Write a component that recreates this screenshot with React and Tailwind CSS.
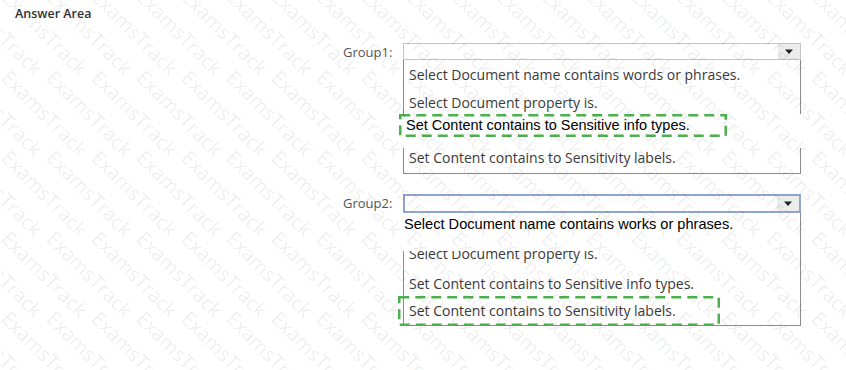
import React from "react";

const OPEN = { fontFamily: '"Open Sans", "Noto Sans", sans-serif' };
const ARIAL = { fontFamily: '"Liberation Sans", Arial, sans-serif' };

function Arrow() {
  return (
    <div className="w-[22px] h-full bg-[#ececec] flex items-center justify-center">
      <svg width="10" height="6" viewBox="0 0 10 6">
        <polygon points="1,0.5 9,0.5 5,5" fill="#222" />
      </svg>
    </div>
  );
}

function DashedBox({ w, h, className }) {
  return (
    <svg className={"absolute pointer-events-none " + className} width={w} height={h} viewBox={`0 0 ${w} ${h}`}>
      <rect x="1.25" y="1.25" width={w - 2.5} height={h - 2.5} fill="none" stroke="#4db04f" strokeWidth="2.5" strokeDasharray="10 6" />
    </svg>
  );
}

function Watermark() {
  const items = [];
  for (let r = 0; r < 6; r++) {
    for (let c = -3; c < 20; c++) {
      items.push(
        <span
          key={r + "-" + c}
          className="absolute whitespace-nowrap text-[20px] leading-none origin-top-left rotate-45 text-black/[0.08]"
          style={{ left: 12 + c * 45, top: -14 + r * 80.5 }}
        >
          ExamsTrack
        </span>
      );
    }
  }
  return (
    <div className="absolute inset-0 pointer-events-none overflow-hidden" style={OPEN}>
      {items}
    </div>
  );
}

export default function App() {
  return (
    <div className="relative w-[846px] h-[370px] bg-white overflow-hidden" style={OPEN}>
      <div className="pt-[5px] pl-[15px] text-[12.5px] leading-[17px] font-semibold text-[#333]">Answer Area</div>

      {/* Group 1 */}
      <div className="mt-[21px] flex pl-[343px]">
        <div className="w-[60px] text-[13px] leading-[18px] text-[#555]">Group1:</div>
        <div className="w-[398px]">
          <div className="h-[17px] border border-[#c4c4c4] flex justify-end bg-white">
            <Arrow />
          </div>
          <div className="border-l border-r border-b border-[#8c8c8c] text-[14px] text-[#3a3a3a]">
            <div className="h-[29px] pl-[5px] leading-[29px]">Select Document name contains words or phrases.</div>
            <div className="h-[25px] pl-[5px] pt-[3px] leading-[22px]">Select Document property is.</div>
            <div className="relative -ml-[5px] -mr-[5px] h-[34px] bg-white">
              <div className="relative w-[328px] h-[23px] pl-[7px] text-[14.5px] leading-[22px] text-black" style={ARIAL}>
                Set Content contains to Sensitive info types.
                <DashedBox w={328} h={23} className="left-0 top-0" />
              </div>
            </div>
            <div className="h-[25px] pl-[5px] leading-[20px]">Set Content contains to Sensitivity labels.</div>
          </div>
        </div>
      </div>

      {/* Group 2 */}
      <div className="mt-[20px] flex pl-[343px]">
        <div className="w-[60px] text-[13px] leading-[19px] text-[#555]">Group2:</div>
        <div className="w-[398px]">
          <div className="h-[19px] border-2 border-[#8ea5cd] flex justify-end bg-white">
            <Arrow />
          </div>
          <div className="border-l border-r border-b border-[#8c8c8c] text-[14px] text-[#3a3a3a]">
            <div className="relative -ml-[1px] h-[38px] bg-white pl-[1px] pt-[1px] text-[14.6px] leading-[20px] text-black" style={ARIAL}>
              Select Document name contains works or phrases.
            </div>
            <div className="h-[20px] overflow-hidden pl-[5px]">
              <div className="-mt-[7px] leading-[20px]">Select Document property is.</div>
            </div>
            <div className="h-[26px] pl-[5px] leading-[26px]">Set Content contains to Sensitive info types.</div>
            <div className="relative h-[28px] pl-[5px] leading-[28px]">
              Set Content contains to Sensitivity labels.
              <DashedBox w={322} h={30} className="-left-[6px] -top-[1px]" />
            </div>
          </div>
        </div>
      </div>

      <Watermark />
    </div>
  );
}
